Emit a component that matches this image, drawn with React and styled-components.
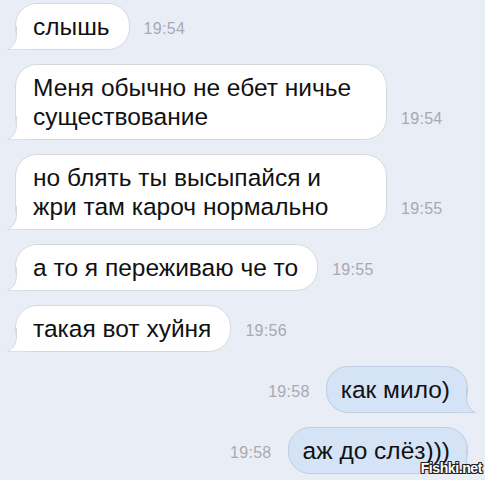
import React from 'react';
import styled, { createGlobalStyle } from 'styled-components';

const GlobalStyle = createGlobalStyle`
  html, body {
    margin: 0;
    padding: 0;
    background: #e9eef6;
  }
  body {
    font-family: "Liberation Sans", Arial, sans-serif;
  }
`;

const Screen = styled.div`
  position: relative;
  width: 485px;
  height: 480px;
  overflow: hidden;
  background: #e9eef6;
  box-sizing: border-box;
  padding: 3px 17px 0 15px;
  display: flex;
  flex-direction: column;
  gap: 14px;
`;

const Row = styled.div`
  display: flex;
  flex-direction: ${(p) => (p.$out ? 'row-reverse' : 'row')};
  align-items: flex-end;
  gap: ${(p) => (p.$out ? '16px' : '14px')};
`;

const Bubble = styled.div`
  position: relative;
  box-sizing: border-box;
  width: ${(p) => (p.$wide ? '372px' : 'auto')};
  padding: ${(p) => (p.$out ? '8px 17px 8px 14px' : '8px 19px 8px 17px')};
  background: ${(p) => (p.$out ? '#d5e3f6' : '#ffffff')};
  border: 1px solid ${(p) => (p.$out ? '#bfcde0' : '#d6dade')};
  border-radius: 22px;
  font-size: 24.5px;
  line-height: 29px;
  color: #111;
  white-space: nowrap;
`;

const Text = styled.span`
  position: relative;
  z-index: 1;
`;

const Tail = styled.svg`
  position: absolute;
  bottom: -1px;
  width: 30px;
  height: 24px;
  ${(p) => (p.$out ? 'right: -9px; transform: scaleX(-1);' : 'left: -9px;')}
`;

const Time = styled.span`
  font-size: 16px;
  line-height: 18px;
  color: #a6aab1;
  margin-bottom: 12px;
  letter-spacing: 0.3px;
`;

const Watermark = styled.div`
  position: absolute;
  right: 3px;
  bottom: 4px;
  z-index: 2;
  font-size: 14px;
  font-weight: bold;
  letter-spacing: -0.4px;
  color: #fff;
  text-shadow: -1px 0 #222, 1px 0 #222, 0 -1px #222, 0 1px #222,
    -1px -1px #222, 1px 1px #222, -1px 1px #222, 1px -1px #222;
`;

function BubbleTail({ out }) {
  const fill = out ? '#d5e3f6' : '#ffffff';
  const stroke = out ? '#bfcde0' : '#d6dade';
  return (
    <Tail $out={out} viewBox="0 0 30 24">
      <path d="M9.5 0 L9.5 8 C9.5 16 6 21 0.5 23.5 L30 23.5 L30 0 Z" fill={fill} />
      <path
        d="M9.5 0 L9.5 8 C9.5 16 6 21 0.5 23.5 C8 24 14 23.5 30 23.5"
        fill="none"
        stroke={stroke}
        strokeWidth="1"
      />
    </Tail>
  );
}

const messages = [
  { lines: ['слышь'], time: '19:54' },
  { lines: ['Меня обычно не ебет ничье', 'существование'], time: '19:54', wide: true },
  { lines: ['но блять ты высыпайся и', 'жри там кароч нормально'], time: '19:55', wide: true },
  { lines: ['а то я переживаю че то'], time: '19:55' },
  { lines: ['такая вот хуйня'], time: '19:56' },
  { lines: ['как мило)'], time: '19:58', out: true },
  { lines: ['аж до слёз)))'], time: '19:58', out: true },
];

export default function App() {
  return (
    <Screen>
      <GlobalStyle />
      {messages.map((m, i) => (
        <Row key={i} $out={m.out}>
          <Bubble $out={m.out} $wide={m.wide}>
            <BubbleTail out={m.out} />
            <Text>
              {m.lines.map((l, j) => (
                <React.Fragment key={j}>
                  {j > 0 && <br />}
                  {l}
                </React.Fragment>
              ))}
            </Text>
          </Bubble>
          <Time>{m.time}</Time>
        </Row>
      ))}
      <Watermark>Fishki.net</Watermark>
    </Screen>
  );
}
